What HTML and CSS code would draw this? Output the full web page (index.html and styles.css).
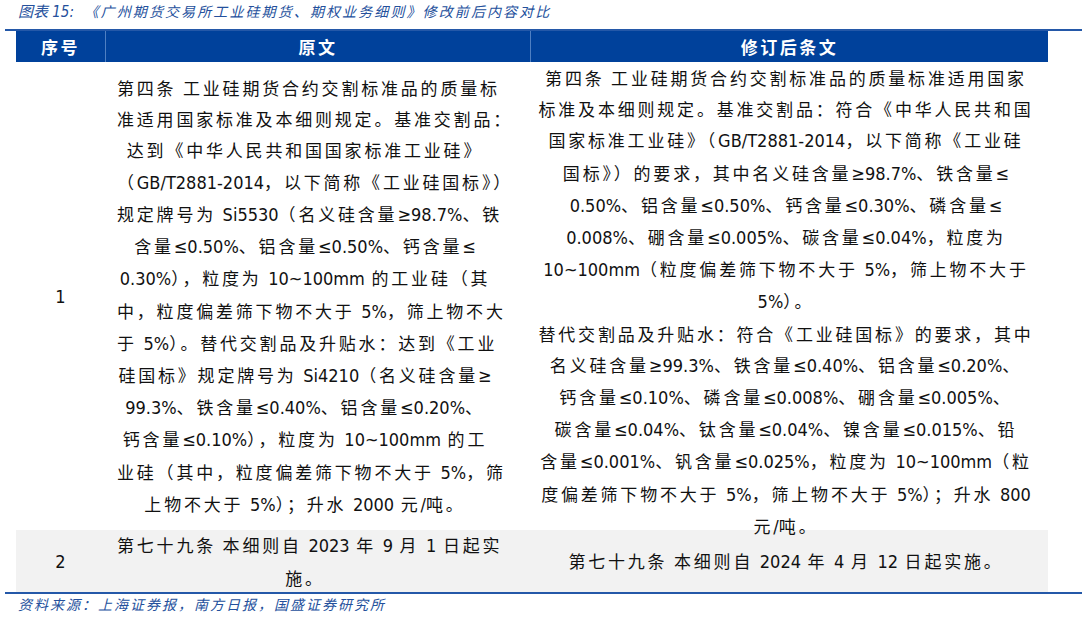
FILE: index.html
```html
<!DOCTYPE html>
<html lang="zh-CN">
<head>
<meta charset="utf-8">
<link rel="stylesheet" href="styles.css">
</head>
<body>
<div class="page">
  <div class="title"><span class="n">图表 15:</span>&nbsp;&nbsp;《广州期货交易所工业硅期货、期权业务细则》修改前后内容对比</div>
  <div class="frame">
    <div class="row head">
      <div class="c1">序号</div>
      <div class="c2">原文</div>
      <div class="c3">修订后条文</div>
    </div>
    <div class="row r1">
      <div class="c1"><span class="n">1</span></div>
      <div class="c2 txt"><div class="in">第四条 工业硅期货合约交割标准品的质量标<br>准适用国家标准及本细则规定。基准交割品：<br>达到《中华人民共和国国家标准工业硅》<br>（<span class="n">GB/T2881-2014</span>，以下简称《工业硅国标》）<br>规定牌号为 <span class="n">Si5530</span>（名义硅含量<span class="n">≥98.7%</span>、铁<br>含量<span class="n">≤0.50%</span>、铝含量<span class="n">≤0.50%</span>、钙含量<span class="n">≤</span><br><span class="n">0.30%</span>），粒度为 <span class="n">10~100mm</span> 的工业硅（其<br>中，粒度偏差筛下物不大于 <span class="n">5%</span>，筛上物不大<br>于 <span class="n">5%</span>）。替代交割品及升贴水：达到《工业<br>硅国标》规定牌号为 <span class="n">Si4210</span>（名义硅含量<span class="n">≥</span><br><span class="n">99.3%</span>、铁含量<span class="n">≤0.40%</span>、铝含量<span class="n">≤0.20%</span>、<br>钙含量<span class="n">≤0.10%</span>），粒度为 <span class="n">10~100mm</span> 的工<br>业硅（其中，粒度偏差筛下物不大于 <span class="n">5%</span>，筛<br>上物不大于 <span class="n">5%</span>）；升水 <span class="n">2000</span> 元<span class="n">/</span>吨。</div></div>
      <div class="c3 txt"><div class="in">第四条 工业硅期货合约交割标准品的质量标准适用国家<br>标准及本细则规定。基准交割品：符合《中华人民共和国<br>国家标准工业硅》（<span class="n">GB/T2881-2014</span>，以下简称《工业硅<br>国标》）的要求，其中名义硅含量<span class="n">≥98.7%</span>、铁含量<span class="n">≤</span><br><span class="n">0.50%</span>、铝含量<span class="n">≤0.50%</span>、钙含量<span class="n">≤0.30%</span>、磷含量<span class="n">≤</span><br><span class="n">0.008%</span>、硼含量<span class="n">≤0.005%</span>、碳含量<span class="n">≤0.04%</span>，粒度为<br><span class="n">10~100mm</span>（粒度偏差筛下物不大于 <span class="n">5%</span>，筛上物不大于<br><span class="n">5%</span>）。<br>替代交割品及升贴水：符合《工业硅国标》的要求，其中<br>名义硅含量<span class="n">≥99.3%</span>、铁含量<span class="n">≤0.40%</span>、铝含量<span class="n">≤0.20%</span>、<br>钙含量<span class="n">≤0.10%</span>、磷含量<span class="n">≤0.008%</span>、硼含量<span class="n">≤0.005%</span>、<br>碳含量<span class="n">≤0.04%</span>、钛含量<span class="n">≤0.04%</span>、镍含量<span class="n">≤0.015%</span>、铅<br>含量<span class="n">≤0.001%</span>、钒含量<span class="n">≤0.025%</span>，粒度为 <span class="n">10~100mm</span>（粒<br>度偏差筛下物不大于 <span class="n">5%</span>，筛上物不大于 <span class="n">5%</span>）；升水 <span class="n">800</span><br>元<span class="n">/</span>吨。</div></div>
    </div>
    <div class="row r2">
      <div class="c1"><span class="n">2</span></div>
      <div class="c2 txt"><div class="in">第七十九条 本细则自 <span class="n">2023</span> 年 <span class="n">9</span> 月 <span class="n">1</span> 日起实<br>施。</div></div>
      <div class="c3 txt"><div class="in">第七十九条 本细则自 <span class="n">2024</span> 年 <span class="n">4</span> 月 <span class="n">12</span> 日起实施。</div></div>
    </div>
  </div>
  <div class="source">资料来源：上海证券报，南方日报，国盛证券研究所</div>
</div>
</body>
</html>
```
FILE: styles.css
```css
html, body {
  margin: 0;
  padding: 0;
  background: #ffffff;
}
body {
  font-family: "Noto Sans CJK SC", sans-serif;
  color: #111111;
}
.page {
  width: 1087px;
  height: 628px;
  overflow: hidden;
}
.title {
  margin: 0 0 7px 18px;
  height: 22px;
  line-height: 22px;
  font-size: 14px;
  font-style: italic;
  letter-spacing: 2.1px;
  color: #24509c;
  white-space: nowrap;
}
.title .n {
  font-family: "DejaVu Sans Condensed", "DejaVu Sans", sans-serif;
  font-stretch: semi-condensed;
  font-size: 15px;
  letter-spacing: 0;
}
.frame {
  margin: 0 5px;
  width: 1077px;
  border-top: 2px solid #2458a8;
  border-bottom: 2px solid #2458a8;
}
.row {
  display: flex;
  margin-left: 11px;
  width: 1032px;
}
.c1 { width: 89px; flex: none; }
.c2 { width: 425px; flex: none; box-sizing: border-box; }
.c3 { width: 518px; flex: none; box-sizing: border-box; }
.head {
  height: 31px;
  background: #00419b;
  color: #ffffff;
  font-weight: bold;
  font-size: 17px;
  letter-spacing: 2.5px;
}
.head > div {
  display: flex;
  align-items: center;
  justify-content: center;
}
.head .c2, .head .c3 {
  border-left: 1px solid #4f7fc2;
}
.txt {
  font-size: 17px;
  letter-spacing: 2.8px;
  line-height: 31.2px;
  text-align: center;
  white-space: nowrap;
}
.in {
  width: 100%;
}
.n {
  font-family: "DejaVu Sans Condensed", "DejaVu Sans", sans-serif;
  font-stretch: semi-condensed;
  font-size: 18px;
  letter-spacing: 0;
}
.r1 {
  height: 468px;
}
.r1 .c1, .r2 .c1 {
  display: flex;
  align-items: center;
  justify-content: center;
}
.r1 .c2, .r2 .c2 {
  padding: 0 37px 0 12px;
  display: flex;
  align-items: center;
}
.r1 .c3 {
  padding: 0 13px 0 7px;
}
.r2 {
  height: 62px;
  background: #f2f2f2;
}
.r2 .c3 {
  padding: 0 13px 0 7px;
  display: flex;
  align-items: center;
}
.source {
  margin: 0 0 0 18px;
  height: 20px;
  line-height: 20px;
  font-size: 14px;
  font-style: italic;
  letter-spacing: 2px;
  color: #24509c;
  white-space: nowrap;
}
```
